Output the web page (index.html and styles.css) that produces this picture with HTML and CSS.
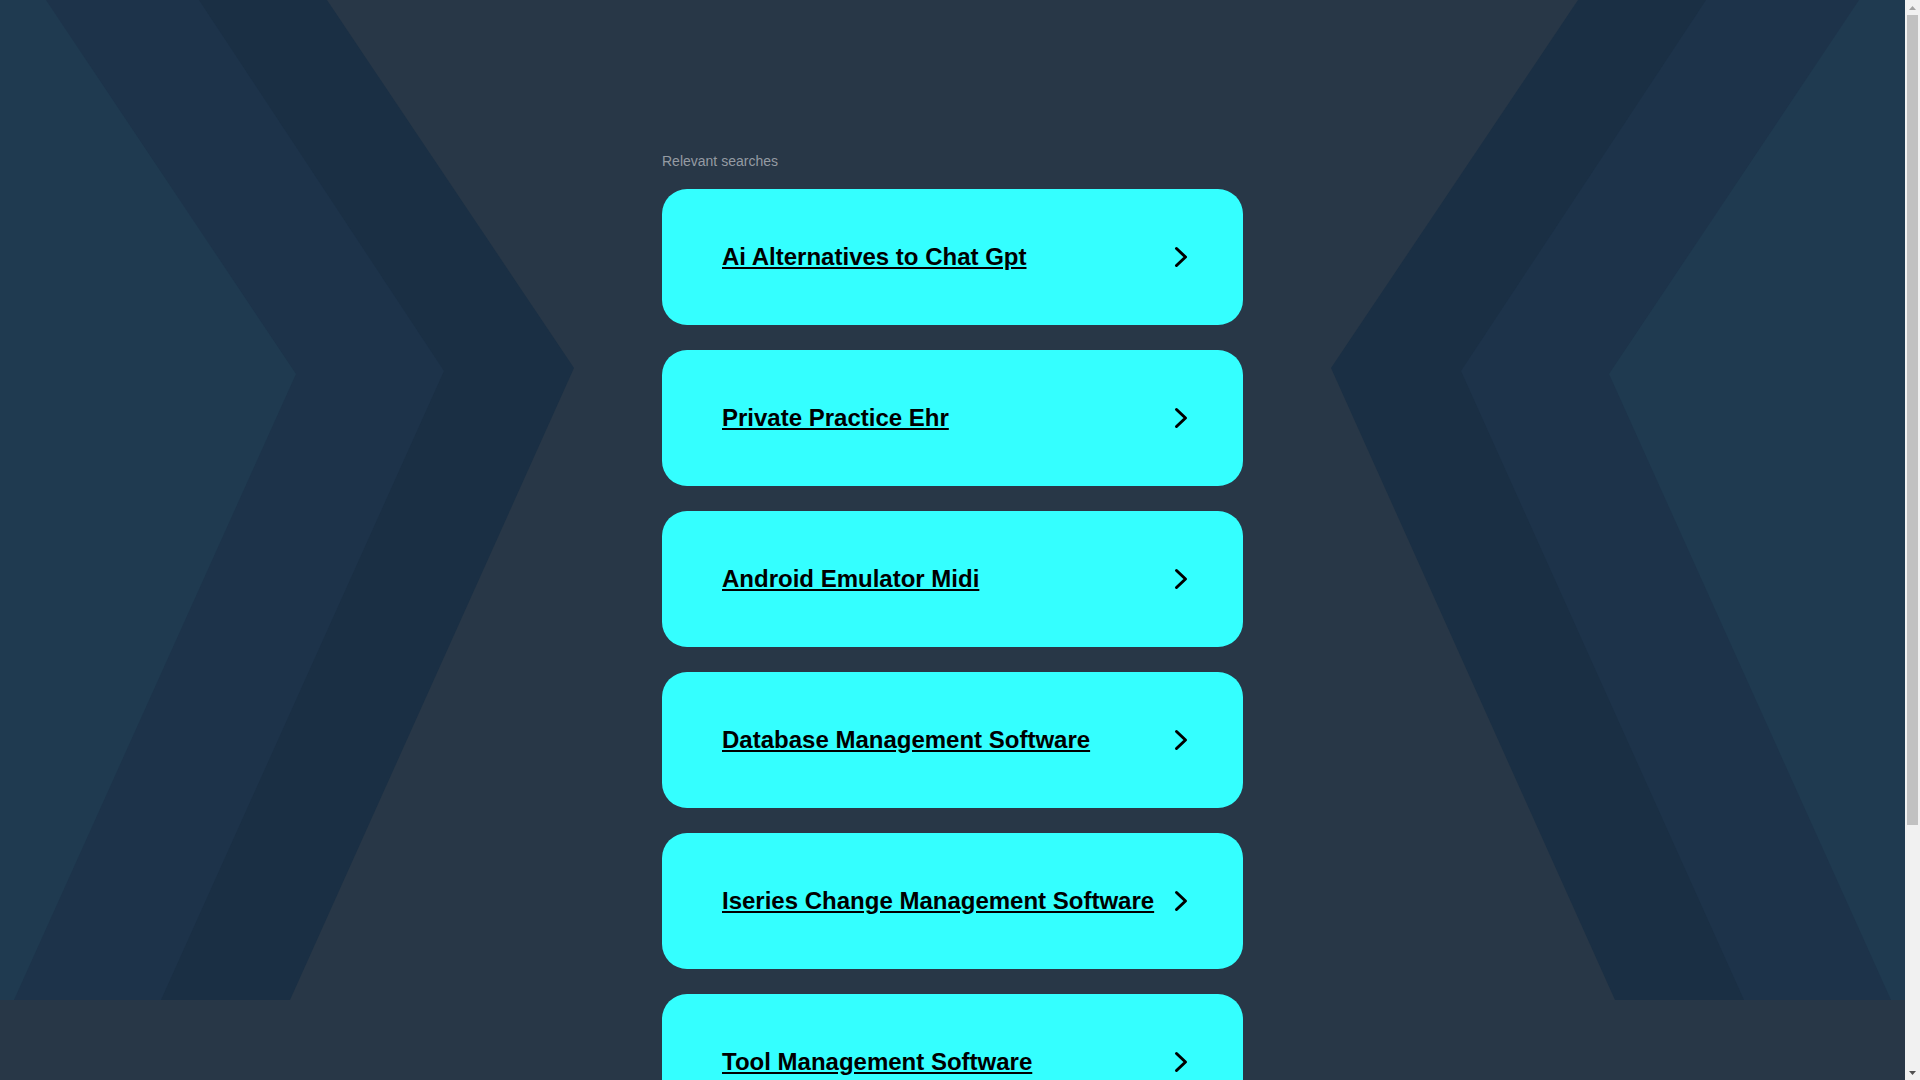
FILE: index.html
```html
<!DOCTYPE html>
<html lang="en">
<head>
<meta charset="utf-8">
<title>Relevant searches</title>
<link rel="stylesheet" href="styles.css">
</head>
<body>
<div class="page">
<main class="results">
  <div class="label">Relevant searches</div>
  <ul class="list">
    <li class="card"><a class="link" href="#">Ai Alternatives to Chat Gpt</a><svg class="arrow" viewBox="0 0 14 22"><path d="M2.5 2.5 L11.5 11 L2.5 19.5"/></svg></li>
    <li class="card"><a class="link" href="#">Private Practice Ehr</a><svg class="arrow" viewBox="0 0 14 22"><path d="M2.5 2.5 L11.5 11 L2.5 19.5"/></svg></li>
    <li class="card"><a class="link" href="#">Android Emulator Midi</a><svg class="arrow" viewBox="0 0 14 22"><path d="M2.5 2.5 L11.5 11 L2.5 19.5"/></svg></li>
    <li class="card"><a class="link" href="#">Database Management Software</a><svg class="arrow" viewBox="0 0 14 22"><path d="M2.5 2.5 L11.5 11 L2.5 19.5"/></svg></li>
    <li class="card"><a class="link" href="#">Iseries Change Management Software</a><svg class="arrow" viewBox="0 0 14 22"><path d="M2.5 2.5 L11.5 11 L2.5 19.5"/></svg></li>
    <li class="card"><a class="link" href="#">Tool Management Software</a><svg class="arrow" viewBox="0 0 14 22"><path d="M2.5 2.5 L11.5 11 L2.5 19.5"/></svg></li>
  </ul>
</main>
</div>
<div class="scrollbar" aria-hidden="true">
  <div class="sb-btn"><svg viewBox="0 0 7 4" class="sb-tri up"><polygon points="0,4 3.5,0 7,4"/></svg></div>
  <div class="sb-thumb"></div>
  <div class="sb-track"></div>
  <div class="sb-btn"><svg viewBox="0 0 7 4" class="sb-tri down"><polygon points="0,0 7,0 3.5,4"/></svg></div>
</div>
</body>
</html>
```
FILE: styles.css
```css
html, body {
  margin: 0;
  padding: 0;
  height: 100%;
  overflow: hidden;
}

body {
  font-family: "Liberation Sans", Arial, sans-serif;
  background-color: #283747;
  display: flex;
}

.page {
  flex: 1;
  min-width: 0;
  height: 100vh;
  overflow: hidden;
  background-color: #283747;
  background-image: url("data:image/svg+xml,%3Csvg xmlns='http://www.w3.org/2000/svg' viewBox='0 0 1905 1000' preserveAspectRatio='none'%3E%3Cpolygon fill='%231a2f44' points='0,0 327,0 574,368 290,1000 0,1000'/%3E%3Cpolygon fill='%231d334a' points='0,0 199,0 444,371 161,1000 0,1000'/%3E%3Cpolygon fill='%231f3a50' points='0,0 46,0 296,374 14,1000 0,1000'/%3E%3Cpolygon fill='%231a2f44' points='1905,0 1578,0 1331,368 1615,1000 1905,1000'/%3E%3Cpolygon fill='%231d334a' points='1905,0 1706,0 1461,371 1744,1000 1905,1000'/%3E%3Cpolygon fill='%231f3a50' points='1905,0 1859,0 1609,374 1891,1000 1905,1000'/%3E%3C/svg%3E");
  background-repeat: no-repeat;
  background-position: top left;
  background-size: 100% 1000px;
}

.scrollbar {
  width: 15px;
  flex: none;
  height: 100vh;
  background: #f1f1f1;
  display: flex;
  flex-direction: column;
}

.sb-btn {
  height: 15px;
  flex: none;
  display: flex;
  align-items: center;
  justify-content: center;
}

.sb-tri {
  width: 7px;
  height: 4px;
}

.sb-tri.up {
  fill: #a3a3a3;
}

.sb-tri.down {
  fill: #505050;
}

.sb-thumb {
  height: 810px;
  flex: none;
  margin: 0 2px;
  background: #c1c1c1;
}

.sb-track {
  flex: 1;
}

.results {
  width: 581px;
  margin: 0 auto;
  padding: 153px 0 0;
}

.label {
  font-size: 14px;
  line-height: 16px;
  color: #959ba3;
  margin-bottom: 20px;
}

.list {
  list-style: none;
  margin: 0;
  padding: 0;
  display: flex;
  flex-direction: column;
  gap: 25px;
}

.card {
  height: 136px;
  box-sizing: border-box;
  background: #34ffff;
  border-radius: 25px;
  display: flex;
  align-items: center;
  padding: 0 55px 0 60px;
}

.link {
  flex: 1;
  font-size: 24px;
  font-weight: bold;
  line-height: 28px;
  color: #000;
  text-decoration: underline;
}

.arrow {
  width: 14px;
  height: 22px;
  flex: none;
  fill: none;
  stroke: #000;
  stroke-width: 3;
  stroke-linecap: round;
  stroke-linejoin: round;
}
```
